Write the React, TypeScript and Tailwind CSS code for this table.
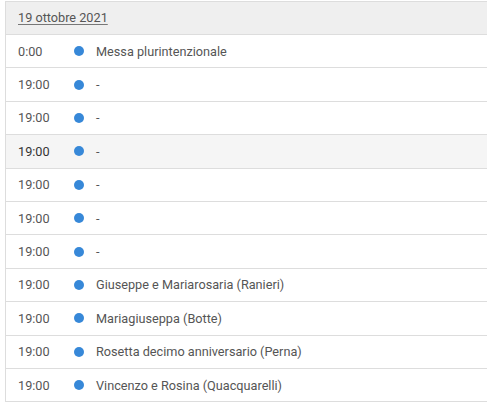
const events = [
  { time: "0:00", title: "Messa plurintenzionale" },
  { time: "19:00", title: "-" },
  { time: "19:00", title: "-" },
  { time: "19:00", title: "-", hover: true },
  { time: "19:00", title: "-" },
  { time: "19:00", title: "-" },
  { time: "19:00", title: "-" },
  { time: "19:00", title: "Giuseppe e Mariarosaria (Ranieri)" },
  { time: "19:00", title: "Mariagiuseppa (Botte)" },
  { time: "19:00", title: "Rosetta decimo anniversario (Perna)" },
  { time: "19:00", title: "Vincenzo e Rosina (Quacquarelli)" },
];

export default function App() {
  return (
    <div className="w-[487px] h-[405px] overflow-hidden bg-white pt-px pl-[5px] font-['Roboto',sans-serif] text-[12.7px] text-[#555]">
      <div className="border-l border-t border-[#ddd]">
        {/* Day header */}
        <div className="h-[33px] flex items-center pl-[12px] bg-[#efefef] border-b border-[#ddd]">
          <span className="underline underline-offset-2 decoration-[#777]">19 ottobre 2021</span>
        </div>

        {/* Events */}
        {events.map((ev, i) => (
          <div
            key={i}
            className={`h-[33.4px] flex items-center border-b border-[#ddd] ${
              ev.hover ? "bg-[#f5f5f5]" : "bg-white"
            }`}
          >
            <div className={`w-[68px] pl-[12px] ${ev.hover ? "text-[#333]" : "text-[#555]"}`}>
              {ev.time}
            </div>
            <div className="w-[22px] flex items-center">
              <span className="w-[10px] h-[10px] rounded-full bg-[#3788d8]" />
            </div>
            <div className="text-[#555]">{ev.title}</div>
          </div>
        ))}
      </div>
    </div>
  );
}
